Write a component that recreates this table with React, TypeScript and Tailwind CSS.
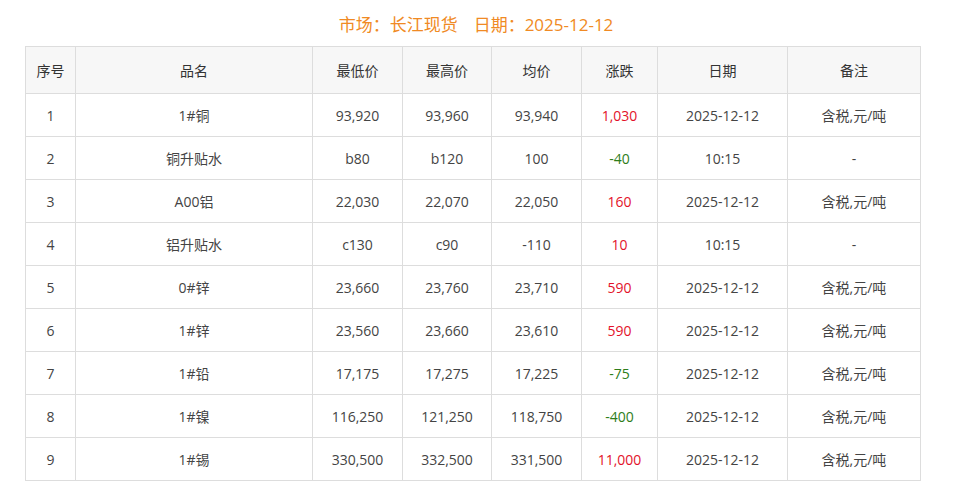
import React from 'react';

const rows = [
  ['1', '1#铜', '93,920', '93,960', '93,940', '1,030', 'up', '2025-12-12', '含税,元/吨'],
  ['2', '铜升贴水', 'b80', 'b120', '100', '-40', 'down', '10:15', '-'],
  ['3', 'A00铝', '22,030', '22,070', '22,050', '160', 'up', '2025-12-12', '含税,元/吨'],
  ['4', '铝升贴水', 'c130', 'c90', '-110', '10', 'up', '10:15', '-'],
  ['5', '0#锌', '23,660', '23,760', '23,710', '590', 'up', '2025-12-12', '含税,元/吨'],
  ['6', '1#锌', '23,560', '23,660', '23,610', '590', 'up', '2025-12-12', '含税,元/吨'],
  ['7', '1#铅', '17,175', '17,275', '17,225', '-75', 'down', '2025-12-12', '含税,元/吨'],
  ['8', '1#镍', '116,250', '121,250', '118,750', '-400', 'down', '2025-12-12', '含税,元/吨'],
  ['9', '1#锡', '330,500', '332,500', '331,500', '11,000', 'up', '2025-12-12', '含税,元/吨'],
];

const headers = ['序号', '品名', '最低价', '最高价', '均价', '涨跌', '日期', '备注'];
const widths = ['w-[50px]', 'w-[237px]', 'w-[90px]', 'w-[89px]', 'w-[90px]', 'w-[76px]', 'w-[130px]', 'w-[133px]'];

export default function App() {
  return (
    <div className="w-[960px] h-[482px] overflow-hidden bg-white font-['Open_Sans','Noto_Sans_CJK_SC',sans-serif] text-[#444]">
      {/* 标题 */}
      <div className="h-[46px] flex items-center justify-center pt-[4px] pr-[8px] text-[17px] text-[#f08a24]">
        <span>市场：长江现货</span>
        <span className="ml-[16px]">日期：2025-12-12</span>
      </div>
      <table className="ml-[25px] w-[896px] table-fixed border-collapse text-[14px]">
        <thead>
          <tr className="h-[47px] bg-[#f7f7f7]">
            {headers.map((h, i) => (
              <th key={h} className={`${widths[i]} border border-[#dddddd] font-normal text-center text-[#333]`}>
                {h}
              </th>
            ))}
          </tr>
        </thead>
        <tbody>
          {rows.map((r) => (
            <tr key={r[0]} className="h-[43px]">
              <td className="border border-[#dddddd] text-center">{r[0]}</td>
              <td className="border border-[#dddddd] text-center">{r[1]}</td>
              <td className="border border-[#dddddd] text-center">{r[2]}</td>
              <td className="border border-[#dddddd] text-center">{r[3]}</td>
              <td className="border border-[#dddddd] text-center">{r[4]}</td>
              <td className={`border border-[#dddddd] text-center ${r[6] === 'up' ? 'text-[#e3122a]' : 'text-[#2e7d1a]'}`}>{r[5]}</td>
              <td className="border border-[#dddddd] text-center">{r[7]}</td>
              <td className="border border-[#dddddd] text-center">{r[8]}</td>
            </tr>
          ))}
        </tbody>
      </table>
    </div>
  );
}
